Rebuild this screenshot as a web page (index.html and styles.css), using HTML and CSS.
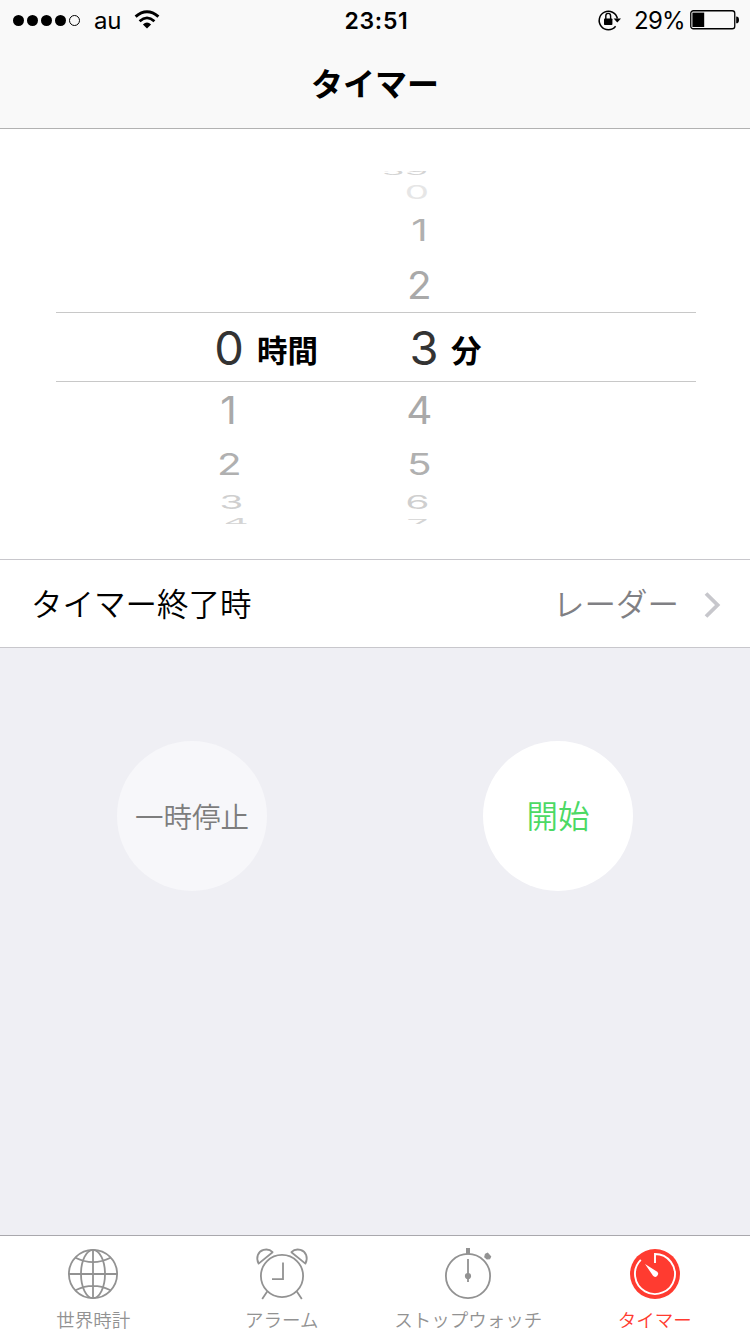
FILE: index.html
```html
<!DOCTYPE html>
<html lang="ja">
<head>
    <meta charset="UTF-8">
    <meta name="viewport" content="width=750">
    <title>タイマー</title>
    <link rel="stylesheet" href="styles.css">
</head>
<body>
<header class="top">
    <div class="status">
        <div class="status-left">
            <div class="signal"><i></i><i></i><i></i><i></i><i class="off"></i></div>
            <span class="carrier">au</span>
            <svg class="wifi" width="26" height="20" viewBox="0 0 26 20">
                <path d="M1.6 6.6 Q13 -3 24.4 6.6" fill="none" stroke="#000" stroke-width="3"/>
                <path d="M5.6 11.2 Q13 4.6 20.4 11.2" fill="none" stroke="#000" stroke-width="2.8"/>
                <path d="M8.9 14.4 Q13 10.4 17.1 14.4 L13 18.6 Z"/>
            </svg>
        </div>
        <div class="clock">23:51</div>
        <div class="status-right">
            <svg class="lock" width="26" height="24" viewBox="0 0 26 24">
                <path d="M18.6 18.2 A9.2 9.2 0 1 1 20.4 10.5" fill="none" stroke="#000" stroke-width="1.5"/>
                <path d="M16.6 10.4 H24 L20.3 14.4 Z"/>
                <rect x="7" y="10.4" width="8.4" height="6.6" rx=".8"/>
                <path d="M8.8 11 V8 a2.4 2.6 0 0 1 4.8 0 V11" fill="none" stroke="#000" stroke-width="1.4"/>
            </svg>
            <span class="percent">29%</span>
            <svg class="battery" width="50" height="20" viewBox="0 0 50 20">
                <rect x=".75" y=".75" width="44" height="18" rx="2.6" fill="none" stroke="#000" stroke-width="1.3"/>
                <rect x="2.4" y="2.6" width="11.8" height="14.4"/>
                <path d="M46.2 6.5 q2.8 0 2.8 3.4 q0 3.4 -2.8 3.4 z"/>
            </svg>
        </div>
    </div>
    <h1>タイマー</h1>
</header>

<section class="picker">
    <div class="wheels">
        <ol class="wheel hours">
            <li class="d4"></li>
            <li class="d3"></li>
            <li class="d2"></li>
            <li class="d1"></li>
            <li class="d0"><span>0</span></li>
            <li class="d1"><span>1</span></li>
            <li class="d2"><span>2</span></li>
            <li class="d3"><span>3</span></li>
            <li class="d4 below"><span>4</span></li>
        </ol>
        <div class="unit">時間</div>
        <ol class="wheel minutes">
            <li class="d4 above"><span>59</span></li>
            <li class="d3 faint"><span>0</span></li>
            <li class="d2 one"><span>1</span></li>
            <li class="d1"><span>2</span></li>
            <li class="d0"><span>3</span></li>
            <li class="d1"><span>4</span></li>
            <li class="d2"><span>5</span></li>
            <li class="d3"><span>6</span></li>
            <li class="d4 below"><span>7</span></li>
        </ol>
        <div class="unit">分</div>
    </div>
    <div class="selection"></div>
</section>

<div class="row">
    <span class="row-label">タイマー終了時</span>
    <span class="row-value">レーダー</span>
    <svg class="chevron" width="18" height="28" viewBox="0 0 18 28">
        <path d="M2 2.5 L13.6 14 L2 25.5" fill="none" stroke="#c7c7cc" stroke-width="3.8"/>
    </svg>
</div>

<main class="buttons">
    <button class="round pause">一時停止</button>
    <button class="round start">開始</button>
</main>

<nav class="tabs">
    <a class="tab">
        <svg width="56" height="56" viewBox="0 0 56 56" fill="none" stroke="#929292" stroke-width="1.8">
            <circle cx="28" cy="28" r="24.1"/>
            <ellipse cx="28" cy="28" rx="12" ry="24.1"/>
            <path d="M28 4 V52 M4 28 H52 M10.5 11.8 Q28 20.5 45.5 11.8 M10.5 44.2 Q28 35.5 45.5 44.2"/>
        </svg>
        <span>世界時計</span>
    </a>
    <a class="tab">
        <svg width="56" height="56" viewBox="0 0 56 56" fill="none" stroke="#929292" stroke-width="1.8">
            <circle cx="28" cy="30" r="21.1"/>
            <path d="M29 16.5 V33.2 H18"/>
            <path d="M13.2 45.5 L8.2 53 M42.8 45.5 L47.8 53"/>
            <path d="M4.6 17.6 C1.5 11.5 4 5.5 9.5 3.9 C13 3 16.5 4 18.6 6.2 Z" stroke-linejoin="round"/>
            <path d="M51.4 17.6 C54.5 11.5 52 5.5 46.5 3.9 C43 3 39.5 4 37.4 6.2 Z" stroke-linejoin="round"/>
        </svg>
        <span>アラーム</span>
    </a>
    <a class="tab">
        <svg width="56" height="56" viewBox="0 0 56 56" fill="#929292">
            <circle cx="28" cy="30" r="22.1" fill="none" stroke="#929292" stroke-width="1.8"/>
            <rect x="26" y="2" width="4" height="6.5"/>
            <rect x="27.1" y="13" width="1.8" height="23"/>
            <circle cx="28" cy="30" r="3.1"/>
            <path d="M45.5 8.2 L47.6 7.2 L50.6 10.6 L49.6 12.8 L47 13 L46 12 L44.8 11 Z" stroke="#929292" stroke-width="1.2"/>
        </svg>
        <span>ストップウォッチ</span>
    </a>
    <a class="tab active">
        <svg width="56" height="56" viewBox="0 0 56 56">
            <circle cx="28" cy="28" r="25" fill="#ff3b30"/>
            <path d="M28 17 V8 A20 20 0 1 1 13.8 13.9" fill="none" stroke="#fff" stroke-width="1.9"/>
            <path d="M18 18 L30.2 25.8 A2.8 2.8 0 1 1 26 29.8 Z" fill="#fff"/>
        </svg>
        <span>タイマー</span>
    </a>
</nav>
</body>
</html>
```
FILE: styles.css
```css
* { box-sizing: border-box; }
body {
    margin: 0; width: 750px; height: 1334px; overflow: hidden;
    display: flex; flex-direction: column;
    background: #efeff4; color: #000;
    font-family: Inter, "Noto Sans CJK JP", sans-serif;
}
svg { display: block; }

/* status bar + title */
.top { height: 129px; background: #f9f9f9; border-bottom: 1px solid #b2b2b2; }
.status { height: 40px; display: grid; grid-template-columns: 1fr auto 1fr; align-items: center; padding: 0 10px 0 13px; }
.status-left, .status-right { display: flex; align-items: center; height: 40px; }
.status-right { justify-content: flex-end; }
.signal { display: flex; gap: 3px; }
.signal i { width: 11px; height: 11px; border-radius: 50%; background: #000; }
.signal .off { background: none; border: 1px solid #000; }
.carrier { font-size: 24px; line-height: 38px; margin: 2px 0 0 14px; letter-spacing: -.3px; }
.wifi { margin: -1px 0 0 13px; }
.clock { font-size: 23px; line-height: 38px; font-weight: 600; letter-spacing: .7px; margin-top: 2px; }
.percent { font-size: 24px; line-height: 38px; margin: 2px 5px 0 11px; letter-spacing: -.7px; }
.top h1 { margin: 24px 0 0; font-size: 32px; line-height: 42px; font-weight: 700; text-align: center; }

/* picker wheels */
.picker { position: relative; height: 430px; background: #fff; }
.wheels { display: flex; padding: 42px 0 0 215px; }
.wheel { list-style: none; margin: 0; padding: 0; width: 28px; height: 353px; clip-path: inset(0 -40px); }
.wheel li { display: flex; align-items: center; justify-content: center; font-size: 47px; line-height: 1; font-weight: 370; }
.wheel span { display: block; }
.hours { margin-right: 14px; }
.minutes { margin: 0 13px 0 92px; }
.wheel .d0 { height: 69px; color: #333; }
.wheel .d1 { height: 56px; color: #a9a9a9; }
.wheel .d2 { height: 52px; color: #b0b0b0; }
.wheel .d3 { height: 24px; color: #cfcfcf; }
.wheel .d4 { height: 10px; color: #d4d4d4; }
.wheel .faint { color: #e6e6e6; }
.d1 span { transform: translateY(-1px) scale(.86, .81); }
.d2 span { transform: translateY(-1px) scale(.86, .64); }
.d3 span { transform: translate(3px, -1px) scale(.82, .4); }
.d4 span { transform: translate(7px, 3px) scale(.82, .22); }
.minutes .d1 span { transform: translate(-5px, -1px) scale(.86, .81); }
.minutes .d2 span { transform: translate(-5px, -1px) scale(.86, .64); }
.minutes .one span { transform: translate(-4px, -2px) scale(.86, .64); }
.minutes .d3 span { transform: translate(-6px, -1px) scale(.82, .4); }
.minutes .faint span { transform: translate(-7px, -2px) scale(.82, .4); }
.minutes .d4 span { transform: translate(-7px, 4px) scale(.82, .22); }
.minutes .above span { transform: translate(-19px, -5px) scale(.82, .22); }
.unit { align-self: center; font-size: 30.5px; font-weight: 700; line-height: 44px; margin-top: 6px; }
.selection {
    position: absolute; left: 56px; right: 54px; top: 183px; height: 70px;
    border-top: 1px solid #c8c8c8; border-bottom: 1px solid #c8c8c8;
}

/* timer end row */
.row {
    display: flex; align-items: center; height: 89px; padding: 0 28px 0 31px;
    background: #fff; border-top: 1px solid #c8c7cc; border-bottom: 1px solid #c8c7cc;
    font-size: 31.5px; line-height: 44px;
}
.row-label { flex: 1; font-weight: 350; margin-top: 2px; }
.row-value { color: #808084; font-weight: 350; margin-top: 2px; }
.chevron { margin: 2px 0 0 25px; }

.buttons { flex: 1; display: flex; justify-content: space-between; align-items: flex-start; padding: 93px 117px 0; }
.round {
    width: 150px; height: 150px; border: 0; border-radius: 50%;
    background: #fff; font-family: inherit; font-weight: 350;
}
.pause { padding: 0 0 2px; background: #f7f7fa; color: #7d7d7d; font-size: 28.5px; }
.start { padding: 0 0 5px; color: #4cd964; font-size: 31.5px; }

/* tab bar */
.tabs { display: flex; height: 99px; background: #fff; border-top: 1px solid #a9a8ad; }
.tab { flex: 1 1 0; min-width: 0; display: flex; flex-direction: column; align-items: center; padding-top: 10px; color: #929292; }
.tab:first-child, .tab:last-child { padding-right: 2px; }
.tab span { font-size: 18.5px; line-height: 28px; margin-top: 4px; font-weight: 350; white-space: nowrap; }
.tabs .active { color: #ff3b30; }
```
